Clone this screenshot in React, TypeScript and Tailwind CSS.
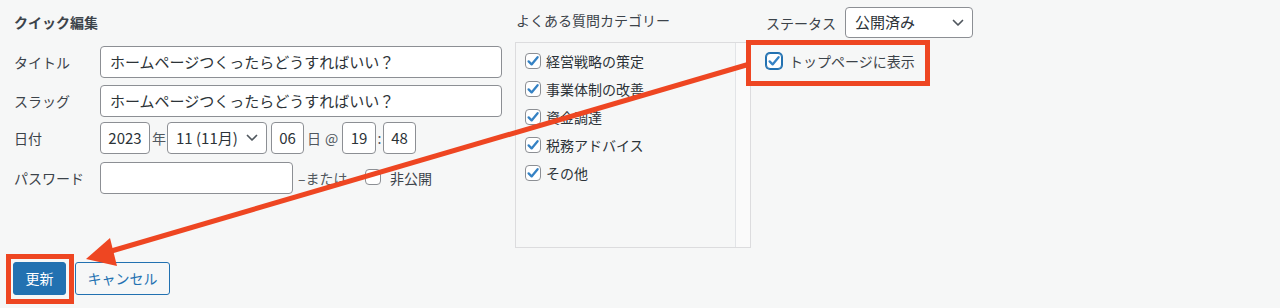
import React from "react";

const FONT = { fontFamily: '"Noto Sans CJK JP", "Noto Sans", sans-serif' };

function Check({ checked = true, focus = false }: { checked?: boolean; focus?: boolean }) {
  return (
    <span
      className={
        "inline-flex items-center justify-center w-[16px] h-[16px] shrink-0 rounded-[4px] bg-white border " +
        (focus ? "border-[#2271b1] shadow-[0_0_0_1px_#2271b1]" : "border-[#8c8f94]")
      }
    >
      {checked && (
        <svg width="14" height="14" viewBox="0 0 14 14">
          <path d="M2.6 7.4 L5.6 10.4 L11.6 3.2" fill="none" stroke="#3582c4" strokeWidth="2.3" strokeLinecap="round" strokeLinejoin="round" />
        </svg>
      )}
    </span>
  );
}

function Chevron() {
  return (
    <svg width="12" height="8" viewBox="0 0 12 8">
      <path d="M1.5 1.5 L6 6 L10.5 1.5" fill="none" stroke="#50575e" strokeWidth="1.7" strokeLinecap="round" strokeLinejoin="round" />
    </svg>
  );
}

const inputCls =
  "h-[32px] bg-white border border-[#8c8f94] rounded-[4px] text-[15px] text-[#2c3338] flex items-center";

export default function App() {
  const cats = ["経営戦略の策定", "事業体制の改善", "資金調達", "税務アドバイス", "その他"];
  return (
    <div className="relative w-[1280px] h-[308px] bg-[#f6f7f7] overflow-hidden text-[#3c434a]" style={FONT}>
      <div className="flex">
        {/* left column */}
        <div className="w-[515px] pl-[14px]">
          <div className="h-[46px] pt-[13px] text-[14px] font-bold leading-[18px] text-[#3c434a]">クイック編集</div>
          <div className="flex items-center">
            <span className="w-[86px] text-[14px] leading-[18px]">タイトル</span>
            <div className={inputCls + " w-[402px] pl-[9px]"}>ホームページつくったらどうすればいい？</div>
          </div>
          <div className="flex items-center mt-[7px]">
            <span className="w-[86px] text-[14px] leading-[18px]">スラッグ</span>
            <div className={inputCls + " w-[402px] pl-[9px]"}>ホームページつくったらどうすればいい？</div>
          </div>
          <div className="flex items-center mt-[5px]">
            <span className="w-[86px] text-[14px] leading-[18px]">日付</span>
            <div className={inputCls + " w-[50px] justify-center"}>2023</div>
            <span className="ml-[2px] w-[15px] text-[14px] text-[#50575e]">年</span>
            <div className={inputCls + " w-[100px] pl-[8px] pr-[8px] justify-between"}>
              <span>11 (11月)</span>
              <Chevron />
            </div>
            <div className={inputCls + " ml-[4px] w-[33px] justify-center"}>06</div>
            <span className="ml-[3px] w-[35px] flex text-[14px] text-[#50575e]">
              <span>日</span>
              <span className="ml-[4px]">@</span>
            </span>
            <div className={inputCls + " w-[34px] justify-center"}>19</div>
            <span className="w-[7px] text-center text-[14px] text-[#50575e]">:</span>
            <div className={inputCls + " w-[33px] justify-center"}>48</div>
          </div>
          <div className="flex items-center mt-[8px]">
            <span className="w-[86px] text-[14px] leading-[18px]">パスワード</span>
            <div className={inputCls + " w-[193px]"}></div>
            <span className="ml-[5px] w-[64px] text-[14px] text-[#50575e] whitespace-nowrap">–または–</span>
            <span className="ml-[3px]">
              <Check checked={false} />
            </span>
            <span className="ml-[9px] text-[14px]">非公開</span>
          </div>
        </div>

        {/* middle column */}
        <div className="w-[236px]">
          <div className="h-[42px] pt-[11px] pl-[1px] text-[14px] leading-[18px]">よくある質問カテゴリー</div>
          <div className="h-[206px] flex border border-[#dcdcde] bg-[#f6f7f7]">
            <div className="flex-1 pl-[9px] pt-[10px]">
              {cats.map((c) => (
                <div key={c} className="flex items-center h-[28px] -mt-[6px] first:mt-0 first:h-[16px] mb-[6px] first:mb-[12px]">
                  <Check />
                  <span className="ml-[5px] text-[14px] leading-[18px] text-[#2c3338]">{c}</span>
                </div>
              ))}
            </div>
            <div className="w-[15px] border-l border-[#e2e4e7] bg-[#fafafa]"></div>
          </div>
        </div>

        {/* right column */}
        <div className="pl-[15px]">
          <div className="flex items-center mt-[7px]">
            <span className="w-[79px] text-[14px] leading-[18px]">ステータス</span>
            <div className="w-[128px] h-[31px] bg-white border border-[#8c8f94] rounded-[4px] flex items-center justify-between pl-[9px] pr-[8px] text-[15px] text-[#2c3338]">
              <span>公開済み</span>
              <Chevron />
            </div>
          </div>
          <div className="flex items-center mt-[15px] h-[16px]">
            <Check focus />
            <span className="ml-[7px] text-[14px] leading-[18px] text-[#3c434a]">トップページに表示</span>
          </div>
        </div>
      </div>

      <div className="flex pl-[13px] mt-[14px]">
        <div className="w-[53px] h-[33px] rounded-[3px] bg-[#2271b1] border border-[#2271b1] text-white text-[14px] flex items-center justify-center">
          更新
        </div>
        <div className="ml-[9px] w-[95px] h-[33px] rounded-[3px] bg-[#f6f7f7] border border-[#2271b1] text-[#2271b1] text-[14px] flex items-center justify-center">
          キャンセル
        </div>
      </div>

      {/* annotations */}
      <div className="absolute left-[746px] top-[40px] w-[184px] h-[46px] border-[5px] border-[#ee4622]"></div>
      <div className="absolute left-[6px] top-[254px] w-[68px] h-[50px] border-[5px] border-[#ee4622]"></div>
      <svg className="absolute left-0 top-0" width="1280" height="308" viewBox="0 0 1280 308">
        <line x1="748" y1="64.5" x2="108" y2="252" stroke="#ee4622" strokeWidth="5" />
        <polygon points="86,259 110,238 117,266" fill="#ee4622" />
      </svg>
    </div>
  );
}
